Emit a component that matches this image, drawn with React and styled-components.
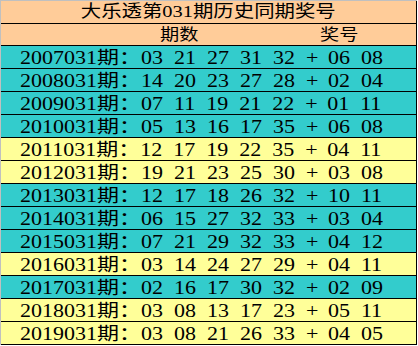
import React from "react";
import styled, { createGlobalStyle } from "styled-components";

const Global = createGlobalStyle`
  html, body { margin: 0; padding: 0; background: #ffffff; }
  #root { width: 418px; height: 346px; }
`;

const COLORS = {
  peach: "#FFCC99",
  teal: "#33CCCC",
  yellow: "#FFFF99",
};

const Table = styled.div`
  width: 416px;
  border-top: 1px solid #c0c0c0;
  border-left: 1px solid #c0c0c0;
  display: flex;
  flex-direction: column;
  font-family: "Liberation Serif", "Noto Sans CJK SC", serif;
  color: #000;
`;

const Row = styled.div`
  box-sizing: border-box;
  height: ${(p) => p.$h || 23}px;
  border-bottom: 1px solid #000;
  border-right: 1px solid #000;
  background: ${(p) => COLORS[p.$bg]};
  display: flex;
  align-items: flex-start;
  justify-content: ${(p) => (p.$center ? "center" : "flex-start")};
  padding-left: ${(p) => p.$pl || 0}px;
  overflow: hidden;
`;

const Title = styled.span`
  display: inline-block;
  font-size: 17px;
  line-height: 22px;
  white-space: pre;
  transform: scaleX(1.2);
  transform-origin: center center;
`;

const HeadLabel = styled.span`
  display: inline-block;
  font-size: 16px;
  line-height: 21px;
  white-space: pre;
  transform: scaleX(1.2);
  transform-origin: left center;
  margin-left: ${(p) => p.$ml || 0}px;
`;

const Data = styled.span`
  display: inline-block;
  font-size: 18px;
  line-height: 22px;
  padding-top: 1px;
  white-space: pre;
  word-spacing: 4.5px;
  transform: scaleX(1.222);
  transform-origin: left center;
`;

const Plus = styled.span`
  display: inline-block;
  width: 9px;
  text-align: center;
`;

const rows = [
  ["2007", "03 21 27 31 32", "06 08", "teal"],
  ["2008", "14 20 23 27 28", "02 04", "teal"],
  ["2009", "07 11 19 21 22", "01 11", "teal"],
  ["2010", "05 13 16 17 35", "06 08", "teal"],
  ["2011", "12 17 19 22 35", "04 11", "yellow"],
  ["2012", "19 21 23 25 30", "03 08", "yellow"],
  ["2013", "12 17 18 26 32", "10 11", "teal"],
  ["2014", "06 15 27 32 33", "03 04", "teal"],
  ["2015", "07 21 29 32 33", "04 12", "teal"],
  ["2016", "03 14 24 27 29", "04 11", "yellow"],
  ["2017", "02 16 17 30 32", "02 09", "teal"],
  ["2018", "03 08 13 17 23", "05 11", "yellow"],
  ["2019", "03 08 21 26 33", "04 05", "yellow"],
];

export default function App() {
  return (
    <>
      <Global />
      <Table>
        <Row $bg="peach" $center $h={23}>
          <Title>大乐透第031期历史同期奖号</Title>
        </Row>
        <Row $bg="peach" $h={22} $pl={159}>
          <HeadLabel>期数</HeadLabel>
          <HeadLabel $ml={128}>奖号</HeadLabel>
        </Row>
        {rows.map(([y, front, back, bg]) => (
          <Row key={y} $bg={bg} $pl={19}>
            <Data>
              {`${y}031期：${front} `}
              <Plus>+</Plus>
              {` ${back}`}
            </Data>
          </Row>
        ))}
      </Table>
    </>
  );
}
